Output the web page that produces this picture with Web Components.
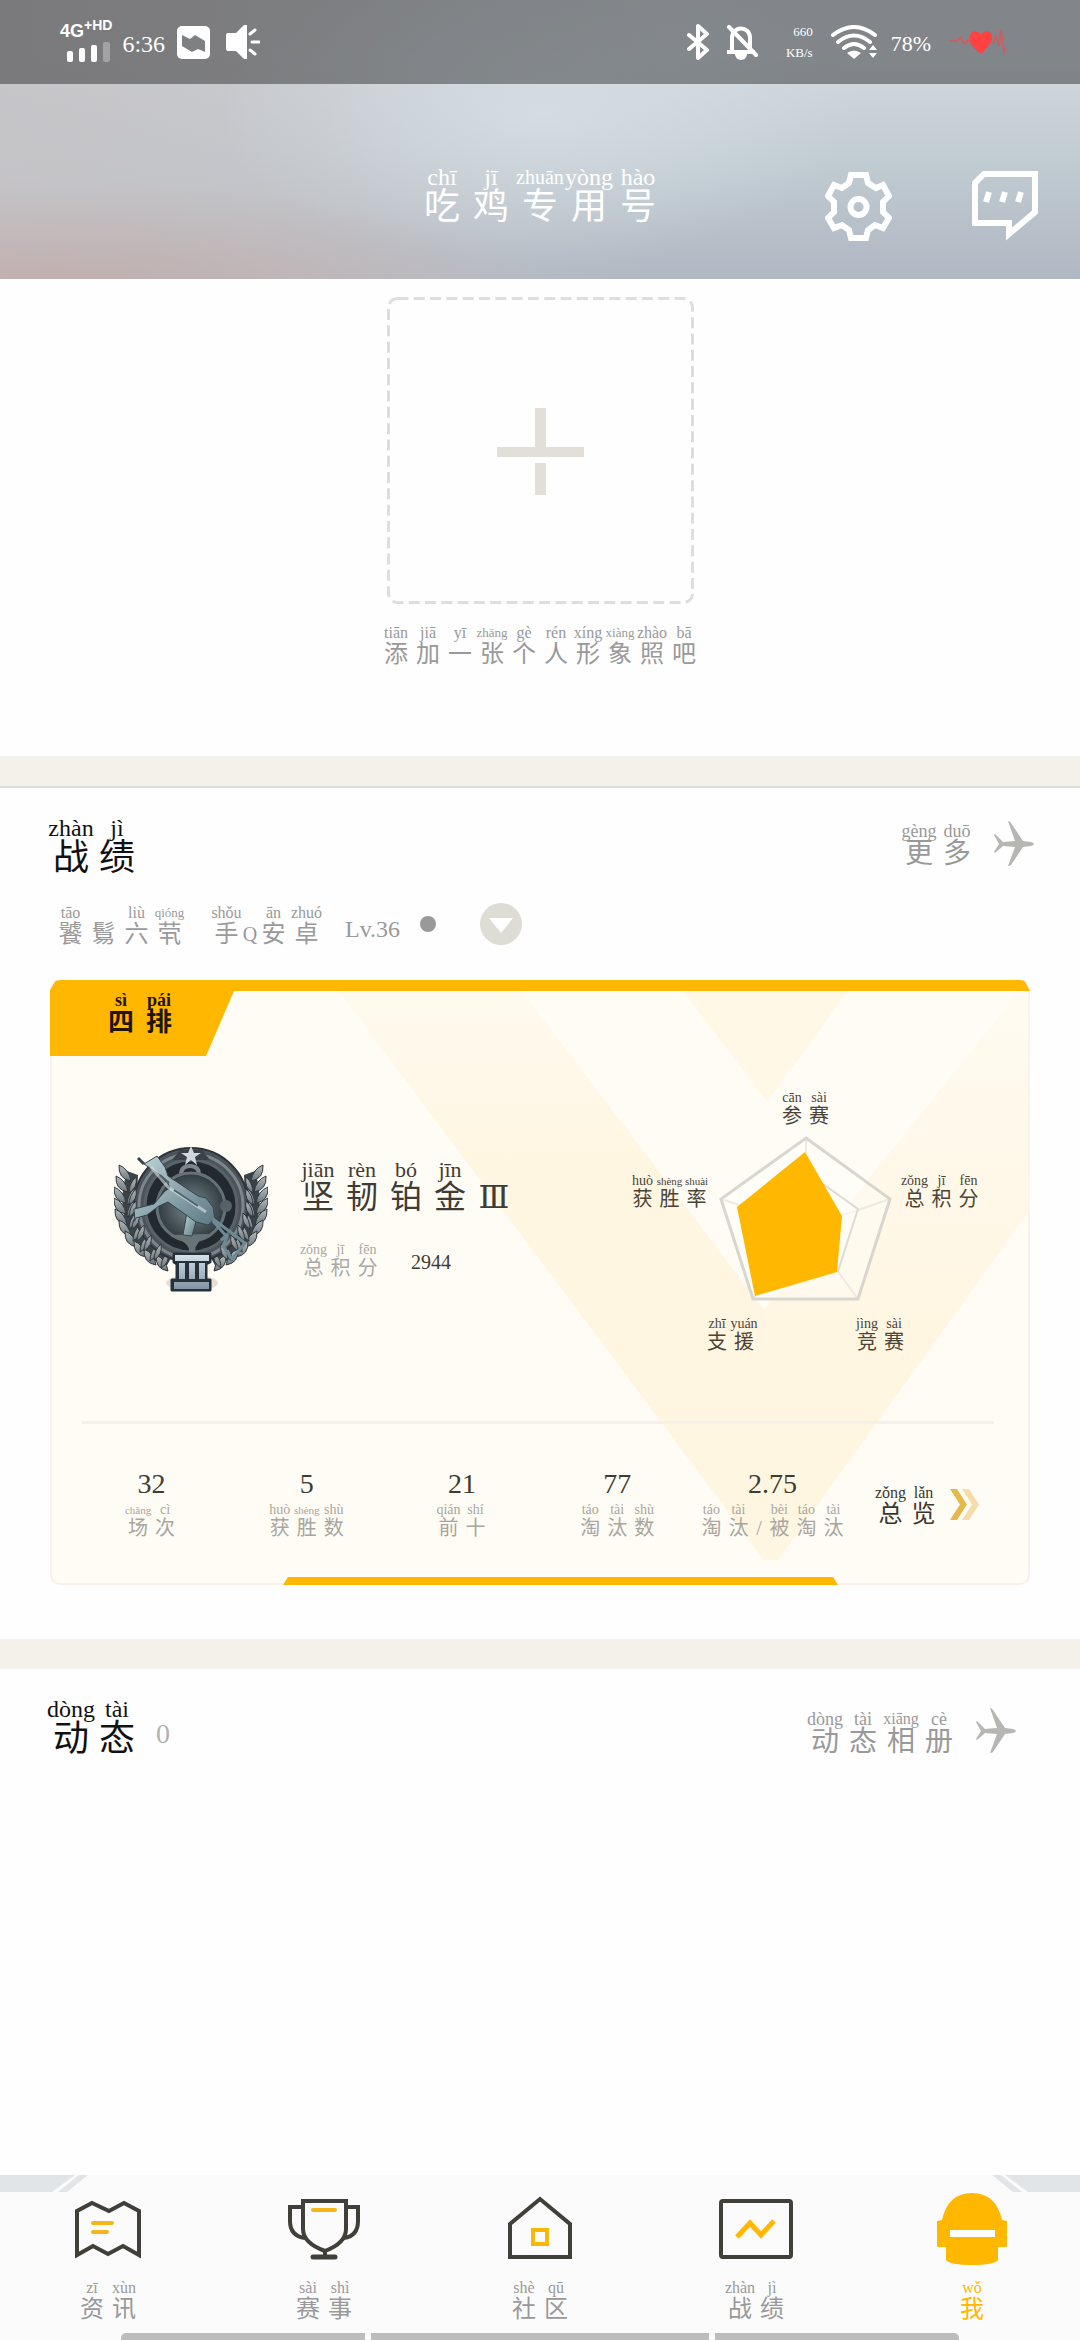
<!DOCTYPE html>
<html lang="zh-CN">
<head>
<meta charset="utf-8">
<meta name="viewport" content="width=device-width, initial-scale=1">
<title>吃鸡专用号</title>
<style>
  body { margin: 0; background: #fefefe; color: #3f3c36; font-family: "Liberation Serif", "Noto Sans CJK SC", serif; }
</style>
</head>
<body>
<profile-page></profile-page>

<script>
const define = (name, html, setup) => {
  const template = document.createElement('template');
  template.innerHTML = html;
  customElements.define(name, class extends HTMLElement {
    constructor() {
      super();
      this.attachShadow({ mode: 'open' }).append(template.content.cloneNode(true));
    }
    connectedCallback() { if (setup) setup(this, this.shadowRoot); }
  });
};

/* Hanzi with a row of pinyin above; "-" in py leaves a character without one. */
define('py-text', `
<style>
  :host { display: inline-grid; grid-auto-flow: column; grid-template-rows: var(--l1) var(--l2); justify-items: center; align-items: start; flex: none;
    --p: 16px; --long: 13px; --h: 24px; --l1: 16px; --l2: 22px; --lh: 26px; --pitch: 32px; }
  :host([size=xl]) { --p: 24px; --long: 20px; --h: 36px; --l1: 24px; --l2: 30px; --lh: 36px; --pitch: 46px; }
  :host([size=l]) { --p: 22px; --long: 20px; --h: 32px; --l1: 22px; --l2: 26px; --lh: 32px; --pitch: 44px; }
  :host([size=m]) { --p: 18px; --long: 16px; --h: 28px; --l1: 18px; --l2: 24px; --lh: 28px; --pitch: 38px; }
  :host([size=s]) { --p: 14px; --long: 11px; --h: 20px; --l1: 14px; --l2: 18px; --lh: 22px; --pitch: 27px; }
  :host([wide]) { --pitch: 49px; }
  span { display: flex; justify-content: center; width: var(--pitch); white-space: nowrap; }
  .p { grid-row: 1; font-size: var(--p); line-height: var(--l1); }
  .p.long { font-size: var(--long); }
  .h { grid-row: 2; font-family: "Liberation Serif", "Noto Sans CJK SC", "DejaVu Serif", serif; font-weight: inherit; font-size: var(--h); line-height: var(--lh); }
  .h.latin { font-family: "Liberation Serif", "DejaVu Serif", serif; }
  .h.narrow { width: 14px; font-size: 20px; }
</style>`, (host, root) => {
  const py = host.getAttribute('py').split(' ');
  [...host.getAttribute('hz')].forEach((ch, i) => {
    const narrow = /[A-Z\/]/.test(ch);
    if (py[i] !== '-') {
      const p = document.createElement('span');
      p.className = 'p' + (py[i].length > 4 ? ' long' : '');
      p.style.gridColumn = i + 1;
      p.textContent = py[i];
      root.append(p);
    }
    const h = document.createElement('span');
    h.className = 'h' + (narrow ? ' latin narrow' : '') + (ch === 'Ⅲ' ? ' latin' : '');
    h.style.gridColumn = i + 1;
    h.textContent = ch;
    root.append(h);
  });
});

define('status-bar', `
<style>
  :host { display: flex; align-items: center; justify-content: space-between; height: 84px; padding: 0 73px 0 60px; box-sizing: border-box; background: rgba(0,0,0,.38); color: #fff; line-height: 24px; }
  div { display: flex; align-items: center; }
  svg { display: block; }
  .net { flex-direction: column; align-items: flex-start; gap: 2px; font: bold 18px/18px "Liberation Sans", sans-serif; }
  .net sup { font-size: 14px; line-height: 0; }
  .net svg { margin-left: 7px; }
  .time { font-size: 24px; margin: 4px 12px 0 10px; }
  .speed { flex-direction: column; align-items: flex-end; font-size: 13px; line-height: 21px; margin: 0 18px 0 28px; }
  .pct { font-size: 22px; margin: 3px 18px 0 13px; }
</style>
<div>
  <div class="net"><span>4G<sup>+HD</sup></span>
    <svg width="44" height="20" viewBox="0 0 44 20" fill="#fff"><rect y="9" width="6" height="11" rx="2"/><rect x="12" y="6" width="6" height="14" rx="2"/><rect x="24" y="3" width="6" height="17" rx="2"/><rect x="36" width="7" height="20" rx="2" opacity=".3"/></svg>
  </div>
  <span class="time">6:36</span>
  <svg width="33" height="33" viewBox="0 0 33 33"><rect width="33" height="33" rx="5" fill="#fff"/><path d="M5 9l8 4 5-4 10 6v11l-7-3-6 3-10-6z" fill="#7f8082"/></svg>
  <svg width="34" height="34" viewBox="0 0 34 34" style="margin-left:16px"><path d="M1 8h9L18 0h3v34h-3l-8-8H1l-1-2V10z" fill="#fff"/><path d="M24 9l5-4M26 17h7M24 25l5 4" stroke="#fff" stroke-width="3" stroke-linecap="round"/></svg>
</div>
<div>
  <svg width="23" height="36" viewBox="0 0 23 36" fill="none" stroke="#fff" stroke-width="4" stroke-linejoin="round" stroke-linecap="round"><path d="M2 11l18 15-9 8V2l9 8L2 25"/></svg>
  <svg width="32" height="35" viewBox="0 0 32 35" style="margin-left:16px"><path d="M6 27V13a9 9 0 0 1 18-1v15M1 27h28" fill="none" stroke="#fff" stroke-width="4"/><path d="M9 29h12a6 6 0 0 1-12 0z" fill="#fff"/><path d="M3 2l27 28" stroke="#fff" stroke-width="4" stroke-linecap="round"/></svg>
  <div class="speed"><span>660</span><span>KB/s</span></div>
  <svg width="47" height="34" viewBox="0 0 47 34"><g fill="none" stroke="#fff" stroke-width="4" stroke-linecap="round"><path d="M2 10Q23-6 44 10M7 17Q23 4 39 17M13 23q10-8 20 0"/></g><path d="M16 28q7-5 14 0l-7 6zM38 25l4-5 4 5zM38 28h8l-4 5z" fill="#fff"/></svg>
  <span class="pct">78%</span>
  <svg width="58" height="32" viewBox="0 0 58 32"><path d="M0 15h8l4-4 3 7 3-3h6M44 18l3-8 3 10 2-16 3 22 2-4" fill="none" stroke="#f44" stroke-width="2" opacity=".55"/><path d="M32 28C23 21 19 16 21 9q4-7 11-1 7-6 11 1 2 7-11 19z" fill="#ff4141"/></svg>
</div>`);

define('profile-header', `
<style>
  :host { display: block; color: #fff; background:
    radial-gradient(ellipse 480px 110px at 5% 104%, rgba(192,172,170,.9) 0%, rgba(192,173,171,0) 100%),
    radial-gradient(ellipse 320px 150px at 50% 40%, rgba(214,224,230,.8), rgba(214,223,229,0)),
    linear-gradient(90deg, rgba(197,195,198,.9), rgba(197,195,198,.6) 30%, rgba(196,194,197,0) 62%),
    linear-gradient(#d2d9df 20%, #c0cad1 60%, #b0b8c3); }
  header { display: grid; grid-template-columns: 1fr auto 1fr; padding: 81px 42px 36px; }
  h1 { grid-column: 2; margin: 0; font-weight: normal; font-size: 36px; display: flex; }
  nav { display: flex; justify-content: flex-end; gap: 80px; padding-top: 6px; }
  button { display: block; padding: 0; border: 0; background: none; }
  svg { display: block; }
</style>
<status-bar></status-bar>
<header>
  <h1><py-text size="xl" wide py="chī jī zhuān yòng hào" hz="吃鸡专用号"></py-text></h1>
  <nav>
    <button aria-label="设置"><svg width="67" height="72" viewBox="0 0 67 72" fill="none" stroke="#fff" stroke-width="6"><path d="M26 4h15l2 8 8 5 7-3 6 11-6 6v10l6 6-6 10-8-3-7 5-2 8H26l-2-8-7-5-8 3-6-10 6-6V31l-6-6 6-11 8 3 7-5z"/><circle cx="33.500" cy="36" r="8"/></svg></button>
    <button aria-label="消息"><svg width="66" height="72" viewBox="0 0 66 72" fill="none" stroke="#fff" stroke-width="6"><path d="M12 3h51v38L37 63V52H3V12z"/><path d="M17 21l-3 10M33 21l-3 10M49 21l-3 10"/></svg></button>
  </nav>
</header>`);

define('photo-upload', `
<style>
  :host { display: flex; flex-direction: column; align-items: center; gap: 21px; padding: 18px 0 93px; color: #999; }
  button { display: block; padding: 0; border: 0; background: none; }
  svg { display: block; }
</style>
<button id="add" aria-label="添加形象照"><svg width="307" height="307" viewBox="0 0 307 307"><rect x="1.500" y="1.500" width="304" height="304" rx="9" fill="none" stroke="#dededc" stroke-width="3" stroke-dasharray="11 5.300"/><path d="M110 150h87v10h-87zM148 111h11v40h-11zM148 166h11v32h-11z" fill="#e1dfd8"/></svg></button>
<py-text py="tiān jiā yī zhāng gè rén xíng xiàng zhào bā" hz="添加一张个人形象照吧"></py-text>`);

define('section-head', `
<style>
  :host { display: flex; justify-content: space-between; align-items: center; padding: 28px 46px 0 48px; }
  :host([low]) { align-items: flex-end; padding-right: 64px; }
  h2 { margin: 0; font-weight: normal; font-size: 36px; display: flex; align-items: flex-end; gap: 16px; color: #111; }
  a { display: flex; align-items: center; gap: 18px; color: #999; text-decoration: none; }
  :host([low]) a { margin-bottom: -2px; }
  svg { display: block; }
</style>
<h2><slot></slot></h2>
<a href="#"><slot name="more"></slot><svg width="40" height="45" viewBox="0 0 40 45" fill="#b6b7b2"><path d="M14 0q2 0 3 2l12 18 8 1q3 1 3 2t-3 2l-8 1-12 18q-1 1-3 1l7-19-12-1-8 7-1-1 5-8-5-9 1-1 8 8 12-1z"/></svg></a>`);

define('account-row', `
<style>
  :host { display: flex; align-items: center; height: 42px; padding: 33px 54px 35px; color: #9a9a9a; }
  py-text { --pitch: 33px; }
  .name { margin-right: 24px; }
  .lv { align-self: flex-end; font-size: 24px; line-height: 32px; margin: 0 20px 0 22px; }
  i { width: 16px; height: 16px; border-radius: 50%; background: #999; }
  button { display: block; padding: 0; border: 0; background: none; margin-left: 44px; }
  svg { display: block; }
</style>
<py-text class="name" py="tāo - liù qióng" hz="饕鬄六茕"></py-text>
<py-text py="shǒu - ān zhuó" hz="手Q安卓"></py-text>
<span class="lv">Lv.36</span><i></i>
<button aria-label="切换账号"><svg width="42" height="42" viewBox="0 0 42 42"><circle cx="21" cy="21" r="21" fill="#deddd5"/><path d="M9 15h24L21 30z" fill="#fff"/></svg></button>`);

define('rank-badge', `
<style>:host { display: block; flex: none; } svg { display: block; }</style>
<svg width="154" height="150" viewBox="0 0 154 150" role="img" aria-label="段位徽章">
  <defs>
    <linearGradient id="gun" x1="0" y1="0" x2="1" y2="1"><stop offset="0" stop-color="#c3d6da"/><stop offset="1" stop-color="#5b7883"/></linearGradient>
    <linearGradient id="leaf" x1="0" y1="0" x2="0" y2="1"><stop offset="0" stop-color="#b4babc"/><stop offset="1" stop-color="#6b767b"/></linearGradient>
    <radialGradient id="pan"><stop offset="0" stop-color="#7c8b90"/><stop offset="1" stop-color="#303a40"/></radialGradient>
    <linearGradient id="bar" x1="0" y1="0" x2="0" y2="1"><stop offset="0" stop-color="#d5e0e9"/><stop offset="1" stop-color="#8295a3"/></linearGradient>
    <path id="lf" d="M0 0q-13-2-12-16q10 4 12 16z"/>
    <path id="li" d="M0 0q9-5 7-16q-7 6-7 16z"/>
    <g id="branch">
      <path d="M13 26Q-6 92 52 122L60 108Q20 88 24 30z" fill="#3a4348" stroke="none"/>
      <use href="#lf" x="17" y="36"/><use href="#lf" x="14" y="47"/><use href="#lf" x="12" y="58"/><use href="#lf" x="12" y="69"/><use href="#lf" x="13" y="80"/><use href="#lf" x="17" y="91"/><use href="#lf" x="23" y="102"/><use href="#lf" x="32" y="112"/><use href="#lf" x="42" y="120"/><use href="#lf" x="54" y="126"/>
      <use href="#li" x="15" y="48"/><use href="#li" x="13" y="60"/><use href="#li" x="13" y="72"/><use href="#li" x="15" y="84"/><use href="#li" x="19" y="96"/><use href="#li" x="26" y="107"/><use href="#li" x="36" y="116"/><use href="#li" x="47" y="123"/>
    </g>
  </defs>
  <ellipse cx="78" cy="138" rx="26" ry="8" fill="#a69f93" opacity=".3"/>
  <g fill="url(#leaf)" stroke="#30383c" stroke-width="1"><use href="#branch"/><use href="#branch" transform="translate(154 0) scale(-1 1)"/></g>
  <circle cx="77" cy="60" r="57" fill="#4b545a" stroke="#2d353a" stroke-width="2"/>
  <circle cx="77" cy="61" r="52" fill="none" stroke="#7d868b" stroke-width="3"/>
  <circle cx="77" cy="61" r="46" fill="#222a30" stroke="#596268" stroke-width="3"/>
  <g fill="url(#leaf)" stroke="#30383c" stroke-width="1"><use href="#li" x="15" y="60"/><use href="#li" x="15" y="72"/><use href="#li" x="18" y="84"/><use href="#li" x="23" y="96"/><use href="#li" x="30" y="106"/><use href="#li" x="40" y="115"/>
    <g transform="translate(154 0) scale(-1 1)"><use href="#li" x="15" y="60"/><use href="#li" x="15" y="72"/><use href="#li" x="18" y="84"/><use href="#li" x="23" y="96"/><use href="#li" x="30" y="106"/><use href="#li" x="40" y="115"/></g></g>
  <path d="M67 30q0-9 9-9t9 9" fill="none" stroke="#7b868b" stroke-width="4"/>
  <circle cx="77" cy="62" r="34" fill="url(#pan)" stroke="#667177" stroke-width="3"/>
  <path d="M56 90q20 8 19 16v10h6v-10q0-9 14-17" fill="#687377"/>
  <path d="M66 5h22l8 10H58z" fill="#3a4247"/>
  <path d="M77 1l3 7h7l-6 4 2 8-6-5-6 5 2-8-6-4h7z" fill="#d0d8db"/>
  <circle cx="112" cy="61" r="6" fill="#576268"/>
  <g fill="url(#gun)" stroke="#34464e" stroke-width="1">
    <path d="M73 67l10 6-5 18-9-1z"/>
    <path d="M30 19l13-8 8 11 3 9 30 20 8 2 7 9 2 12-7 6-12-3-28-20-9 4-12 9-11 3-2 3H21l-1-12 20-5 11-13 5-3-3-7-7-6z"/>
  </g>
  <path d="M99 74l32 24-13 16-9-13 4-9-14-16M107 95l7-6" fill="none" stroke="#6c8994" stroke-width="3"/>
  <path d="M37 22l17 20 38 25" fill="none" stroke="#dbe6e8" stroke-width="3" opacity=".6"/>
  <path d="M46 30l9 8M60 45l24 16" stroke="#4d646d" stroke-width="2"/>
  <path d="M24 13l6 6" stroke="#3a4348" stroke-width="3"/>
  <path d="M60 109h36v8l-4 2v16h4v10H58v-10h5v-16l-3-2z" fill="#26313a" stroke="#26313a" stroke-width="3" stroke-linejoin="round"/>
  <path d="M61 110h34v6H61zM65 118h6v16h-6zM75 118h6v16h-6zM85 118h6v16h-6zM60 137h35v7H60z" fill="url(#bar)"/>
</svg>`);

define('radar-chart', `
<style>
  :host { display: flex; flex-direction: column; align-items: center; color: #4a4438; }
  .mid { display: flex; gap: 9px; margin-top: 13px; }
  .mid py-text { margin-top: 38px; align-self: flex-start; }
  .low { display: flex; gap: 96px; margin-top: 16px; }
  svg { display: block; }
</style>
<py-text size="s" py="cān sài" hz="参赛"></py-text>
<div class="mid">
  <py-text size="s" py="huò shèng shuài" hz="获胜率"></py-text>
  <svg width="173" height="165" viewBox="0 0 173 165">
    <path d="M87 2L171 63 139 163H34L2 63z" fill="#fff" fill-opacity=".35"/>
    <path d="M87 92V2M87 92l84-29M87 92l52 71M87 92l-53 71M87 92L2 63" stroke="#eeeae2" stroke-width="2"/>
    <path d="M87 36l52 37-20 62H55L35 73z" fill="#fffdf8" fill-opacity=".5" stroke="#dfdbd4" stroke-width="2"/>
    <path d="M87 2L171 63 139 163H34L2 63z" fill="none" stroke="#d9d5cf" stroke-width="3"/>
    <path d="M86 16l37 64-5 56-82 24L18 71z" fill="#ffb700"/>
  </svg>
  <py-text size="s" py="zǒng jī fēn" hz="总积分"></py-text>
</div>
<div class="low"><py-text size="s" py="zhī yuán" hz="支援"></py-text><py-text size="s" py="jìng sài" hz="竞赛"></py-text></div>`);

define('stat-item', `
<style>
  :host { display: flex; flex: 1 1 0; flex-direction: column; align-items: center; gap: 2px; color: #a8a69f; }
  b { font-weight: normal; font-size: 28px; line-height: 34px; color: #3f3b33; }
</style>
<b><slot></slot></b><slot name="label"></slot>`);

define('record-card', `
<style>
  :host { display: flex; flex-direction: column; position: relative; margin: 0 50px 54px; background: #fffcf5; border-radius: 10px; overflow: hidden; box-shadow: inset 0 0 0 2px #f8f2ea; }
  .bg { position: absolute; inset: 0; width: 100%; height: 100%; }
  .tab { position: relative; display: flex; height: 65px; padding: 11px 52px 0; background: #ffb700; color: #1f1508; font-weight: bold;
    clip-path: polygon(0 10px, 6px 0, calc(100% - 6px) 0, 100% 11px, 184px 11px, 156px 100%, 0 100%); }
  .tab py-text { --h: 26px; }
  .body { position: relative; display: flex; align-items: center; padding: 35px 48px 72px 64px; }
  .info { display: flex; flex-direction: column; align-items: flex-start; gap: 36px; margin: 0 auto 7px 28px; }
  .score { display: flex; align-items: flex-end; gap: 30px; padding-left: 4px; color: #a9a9a5; }
  .score span { font-size: 20px; line-height: 26px; color: #3f3b33; }
  hr { position: relative; width: auto; height: 3px; margin: 0 36px 0 32px; border: 0; background: #f5f0e9; }
  .stats { position: relative; display: flex; padding: 43px 51px 42px 24px; }
  .all { display: flex; align-items: center; gap: 10px; margin: 18px 0 12px 24px; color: #3a362e; text-decoration: none; }
  .all py-text { --pitch: 33px; }
  .foot { position: relative; height: 8px; margin: 0 192px 0 233px; background: #ffb700; clip-path: polygon(5px 0, calc(100% - 5px) 0, 100% 100%, 0 100%); }
  svg { display: block; }
</style>
<svg class="bg" viewBox="0 0 980 605" preserveAspectRatio="none">
  <defs>
    <linearGradient id="l" x1="0" y1="0" x2="0" y2="1"><stop offset="0" stop-color="#fff6e2" stop-opacity=".3"/><stop offset=".3" stop-color="#fff6e2"/></linearGradient>
    <linearGradient id="r" x1="0" y1="0" x2="0" y2="1"><stop offset="0" stop-color="#fff6e2" stop-opacity=".2"/><stop offset=".6" stop-color="#fff6e2"/></linearGradient>
  </defs>
  <path d="M289 11h183l242 319v250z" fill="url(#l)"/>
  <path d="M714 330L969 11h11v219L728 580h-14z" fill="url(#r)"/>
  <path d="M633 11h165l-81 111z" fill="#fff8e7"/>
</svg>
<div class="tab"><py-text size="m" py="sì pái" hz="四排"></py-text></div>
<div class="body">
  <rank-badge></rank-badge>
  <div class="info">
    <py-text size="l" py="jiān rèn bó jīn -" hz="坚韧铂金Ⅲ"></py-text>
    <div class="score"><py-text size="s" py="zǒng jī fēn" hz="总积分"></py-text><span>2944</span></div>
  </div>
  <radar-chart></radar-chart>
</div>
<hr>
<div class="stats">
  <stat-item>32<py-text slot="label" size="s" py="chǎng cì" hz="场次"></py-text></stat-item>
  <stat-item>5<py-text slot="label" size="s" py="huò shèng shù" hz="获胜数"></py-text></stat-item>
  <stat-item>21<py-text slot="label" size="s" py="qián shí" hz="前十"></py-text></stat-item>
  <stat-item>77<py-text slot="label" size="s" py="táo tài shù" hz="淘汰数"></py-text></stat-item>
  <stat-item>2.75<py-text slot="label" size="s" py="táo tài - bèi táo tài" hz="淘汰/被淘汰"></py-text></stat-item>
  <a class="all" href="#"><py-text py="zǒng lǎn" hz="总览"></py-text>
    <svg width="29" height="31" viewBox="0 0 29 31"><path d="M12 0h7l10 15.500L19 31h-7l10-15.500z" fill="#f4dcab"/><path d="M0 0h7l10 15.500L7 31H0l10-15.500z" fill="#e5b84c"/></svg></a>
</div>
<div class="foot"></div>`);

define('tab-item', `
<style>
  :host { display: block; flex: 1 1 0; }
  a { display: flex; flex-direction: column; align-items: center; gap: 15px; color: #999; text-decoration: none; }
  :host([active]) a { color: #ffb700; }
  ::slotted(svg) { display: block; }
</style>
<a href="#"><slot name="icon"></slot><slot></slot></a>`);

define('tab-bar', `
<style>
  :host { display: block; position: relative; background: #fbfbfb; }
  .corner { position: absolute; top: 0; left: 0; }
  .corner.right { left: auto; right: 0; transform: scaleX(-1); }
  nav { display: flex; padding: 18px 0 15px; }
  .grip { display: flex; gap: 6px; padding: 0 121px; }
  .grip i { flex: 244 1 0; height: 7px; background: #bcbcbc; }
  .grip i:nth-child(2) { flex-grow: 338; }
  .grip i:first-child { border-top-left-radius: 5px; }
  .grip i:last-child { border-top-right-radius: 5px; }
  svg { fill: none; stroke: #403f39; stroke-width: 4; }
</style>
<svg class="corner" width="90" height="17" viewBox="0 0 90 17"><path d="M0 0h75L52 17H0zM79 0h9L67 17h-9z" fill="#e2e5e8" stroke="none"/></svg>
<svg class="corner right" width="90" height="17" viewBox="0 0 90 17"><path d="M0 0h75L52 17H0zM79 0h9L67 17h-9z" fill="#e2e5e8" stroke="none"/></svg>
<nav>
  <tab-item><svg slot="icon" width="72" height="72" viewBox="0 0 72 72"><path d="M5 18v44l16-9 15 8 15-8 16 9V18L52 10 37 18 20 10z"/><path d="M21 30h19M21 39h14" stroke="#f6b518" stroke-linecap="round"/></svg><py-text py="zī xùn" hz="资讯"></py-text></tab-item>
  <tab-item><svg slot="icon" width="72" height="72" viewBox="0 0 72 72"><path d="M15 8h43v28q0 14-21 22-22-8-22-22zM15 14H2v14q0 15 15 17M58 14h12v14q0 15-14 17M37 58v7"/><path d="M25 64h22" stroke-width="5" stroke-linecap="round"/><path d="M25 17h22" stroke="#f6b518" stroke-linecap="round"/></svg><py-text py="sài shì" hz="赛事"></py-text></tab-item>
  <tab-item><svg slot="icon" width="72" height="72" viewBox="0 0 72 72"><path d="M6 31v33h60V31L36 6z"/><path d="M29 37h14v14H29z" stroke="#f9b707"/></svg><py-text py="shè qū" hz="社区"></py-text></tab-item>
  <tab-item><svg slot="icon" width="74" height="72" viewBox="0 0 74 72"><rect x="2" y="8" width="70" height="56" rx="2"/><path d="M18 44l13-14 11 12 13-14" stroke="#ffb700" stroke-width="5"/></svg><py-text py="zhàn jì" hz="战绩"></py-text></tab-item>
  <tab-item active><svg slot="icon" width="72" height="72" viewBox="0 0 72 72"><path d="M6 27Q12 0 36 0t30 27l5 1v25l-1 1h-8v13q-4 5-26 5t-26-5V54H2l-1-1V28z" fill="#ffb700" stroke="none"/><path d="M14 37h45v7H14z" fill="#fff" stroke="none"/></svg><py-text py="wǒ" hz="我"></py-text></tab-item>
</nav>
<div class="grip"><i></i><i></i><i></i></div>`);

define('profile-page', `
<style>
  :host { display: flex; flex-direction: column; min-height: 100vh; }
  main { flex: 1; }
  .band { height: 30px; background: #f4f1ea; }
  .line { height: 2px; background: #dddddc; }
  .count { font-size: 28px; line-height: 34px; color: #b3b3b3; }
</style>
<profile-header></profile-header>
<main>
  <photo-upload></photo-upload>
  <div class="band"></div><div class="line"></div>
  <section-head><py-text size="xl" py="zhàn jì" hz="战绩"></py-text><py-text slot="more" size="m" py="gèng duō" hz="更多"></py-text></section-head>
  <account-row></account-row>
  <record-card></record-card>
  <div class="band"></div>
  <section-head low><py-text size="xl" py="dòng tài" hz="动态"></py-text><span class="count">0</span><py-text slot="more" size="m" py="dòng tài xiāng cè" hz="动态相册"></py-text></section-head>
</main>
<tab-bar></tab-bar>`);
</script>
</body>
</html>
